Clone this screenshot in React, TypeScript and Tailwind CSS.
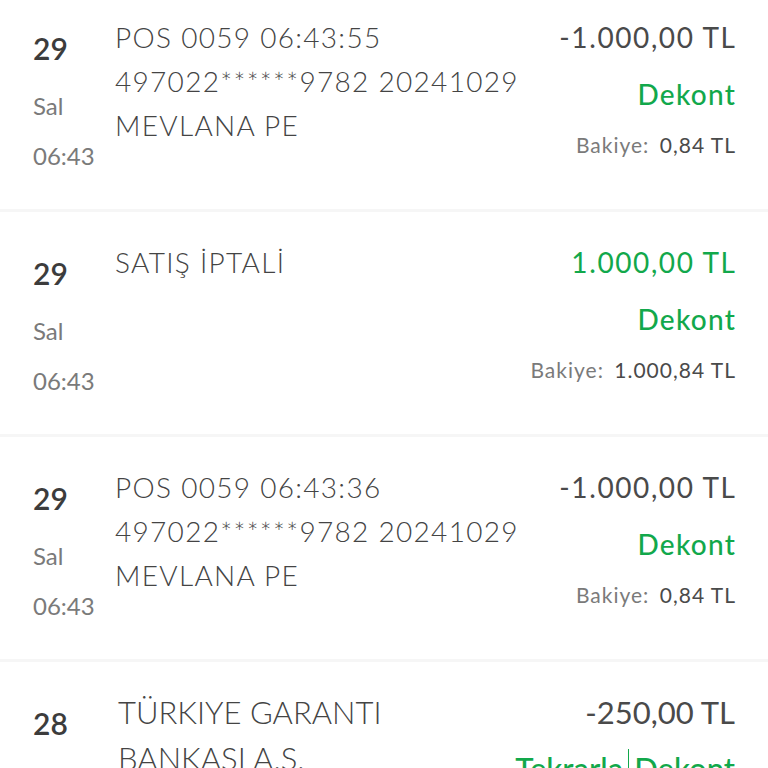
const rows = [
  {
    day: "29",
    weekday: "Sal",
    time: "06:43",
    lines: ["POS 0059 06:43:55", "497022******9782 20241029", "MEVLANA PE"],
    amount: "-1.000,00 TL",
    positive: false,
    balance: "0,84 TL",
  },
  {
    day: "29",
    weekday: "Sal",
    time: "06:43",
    lines: ["SATIŞ İPTALİ"],
    amount: "1.000,00 TL",
    positive: true,
    balance: "1.000,84 TL",
  },
  {
    day: "29",
    weekday: "Sal",
    time: "06:43",
    lines: ["POS 0059 06:43:36", "497022******9782 20241029", "MEVLANA PE"],
    amount: "-1.000,00 TL",
    positive: false,
    balance: "0,84 TL",
  },
];

function Row({ row }: { row: (typeof rows)[number] }) {
  return (
    <div className="flex h-[225px] shrink-0 border-b-[3px] border-[#f6f6f6] pl-[33px] pr-[33px] pt-[28px]">
      <div className="flex w-[82px] shrink-0 flex-col">
        <span className="mt-[11px] text-[30px] font-semibold leading-[44px] text-[#3c3c3c]">{row.day}</span>
        <span className="mt-[20px] text-[24px] leading-[32px] text-[#7a7a7a]">{row.weekday}</span>
        <span className="mt-[18px] text-[24px] leading-[32px] text-[#7a7a7a]">{row.time}</span>
      </div>
      <div className="flex flex-1 flex-col text-[28px] font-light leading-[44px] tracking-[1.3px] text-[#444]">
        {row.lines.map((l) => (
          <span key={l}>{l}</span>
        ))}
      </div>
      <div className="flex flex-col items-end">
        <span
          className={`mr-[-1.6px] text-[28px] leading-[44px] tracking-[1.6px] ${
            row.positive ? "text-[#12a84b]" : "text-[#4a4a4a]"
          }`}
        >
          {row.amount}
        </span>
        <span className="mr-[-1.3px] mt-[13px] text-[28px] font-medium leading-[44px] tracking-[1.3px] text-[#12a84b]">
          Dekont
        </span>
        <span className="mr-[-1px] mt-[14px] text-[21px] leading-[30px] tracking-[1px] text-[#7a7a7a]">
          Bakiye: <span className="ml-1 text-[#4a4a4a]">{row.balance}</span>
        </span>
      </div>
    </div>
  );
}

export default function App() {
  return (
    <div
      className="flex h-[768px] w-[768px] flex-col overflow-hidden bg-white"
      style={{ fontFamily: "Lato, 'Open Sans', sans-serif" }}
    >
      <div className="-mt-[13px] flex flex-col">
        {rows.map((r, i) => (
          <Row key={i} row={r} />
        ))}
        <div className="flex h-[225px] shrink-0 pl-[33px] pr-[33px] pt-[27px]">
          <div className="flex w-[85px] shrink-0 flex-col">
            <span className="mt-[12px] text-[30px] font-semibold leading-[44px] text-[#3c3c3c]">28</span>
          </div>
          <div className="flex flex-1 flex-col text-[31px] font-light leading-[46px] text-[#444]">
            <span>TÜRKIYE GARANTI</span>
            <span>BANKASI A.S.</span>
          </div>
          <div className="flex flex-col items-end">
            <span className="text-[31px] leading-[46px] text-[#4a4a4a]">-250,00 TL</span>
            <span className="mt-[10px] flex items-center text-[31px] font-medium leading-[46px] text-[#12a84b]">
              Tekrarla
              <span className="mx-[5px] h-[38px] w-px bg-[#12a84b]" />
              Dekont
            </span>
          </div>
        </div>
      </div>
    </div>
  );
}
